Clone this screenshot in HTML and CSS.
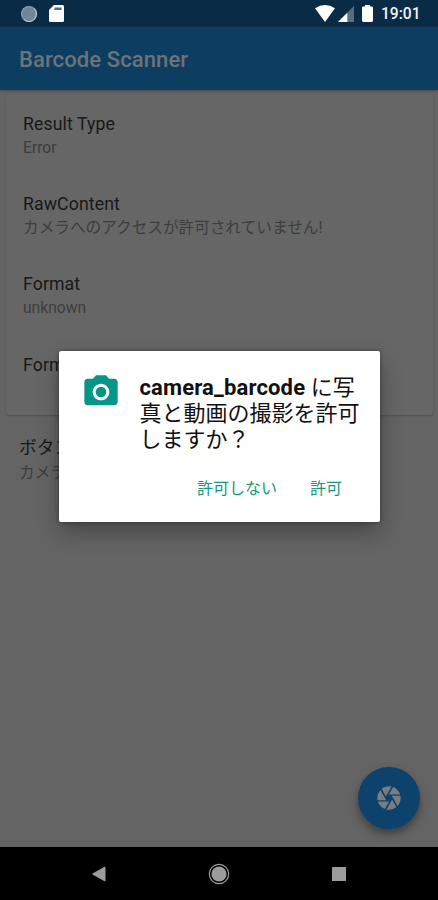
FILE: index.html
```html
<!DOCTYPE html>
<html lang="ja">
<head>
<meta charset="utf-8">
<meta name="viewport" content="width=device-width">
<title>Barcode Scanner</title>
<link rel="stylesheet" href="styles.css">
</head>
<body>
<div class="screen">
  <header class="status">
    <div class="status-left">
      <span class="sync"></span>
      <svg class="sd" viewBox="0 0 15 17"><path d="M5 0H13.5Q15 0 15 1.5V15.5Q15 17 13.5 17H1.5Q0 17 0 15.5V5Z" fill="#fff"/><path d="M6 2.5H12.5V5H5Z" fill="#53687d"/></svg>
    </div>
    <div class="status-right">
      <svg class="wifi" viewBox="0 0 20 17"><path d="M0 3.2Q10-3.2 20 3.2L10 17Z" fill="#fff"/></svg>
      <svg class="cell" viewBox="0 0 16 16"><path d="M16 0V16H0Z" fill="#536f83"/><path d="M9.3 6.7V16H0Z" fill="#fff"/></svg>
      <svg class="battery" viewBox="0 0 11 17"><path d="M3 0H8V1.6H9.7Q11 1.6 11 3V15.6Q11 17 9.7 17H1.3Q0 17 0 15.6V3Q0 1.6 1.3 1.6H3Z" fill="#fff"/></svg>
      <span class="clock">19:01</span>
    </div>
  </header>
  <div class="appbar"><h1 class="heading">Barcode Scanner</h1></div>
  <main class="content">
    <section class="card">
      <div class="tile"><div class="name">Result Type</div><div class="value">Error</div></div>
      <div class="tile"><div class="name">RawContent</div><div class="value">カメラへのアクセスが許可されていません!</div></div>
      <div class="tile"><div class="name">Format</div><div class="value">unknown</div></div>
      <div class="tile"><div class="name">Format</div></div>
    </section>
    <div class="tile outside"><div class="name">ボタン</div><div class="value">カメラ</div></div>
    <button class="fab" aria-label="Scan">
      <svg viewBox="0 0 24 24"><path fill="#7c7c7c" d="M9.4 10.5l4.77-8.26C13.47 2.09 12.75 2 12 2c-2.4 0-4.6.85-6.32 2.25l3.66 6.35.06-.1zM21.54 9c-.92-2.92-3.15-5.26-6-6.34L11.88 9h9.66zm.26 1h-7.49l.29.5 4.76 8.25C21 16.97 22 14.61 22 12c0-.69-.07-1.35-.2-2zM8.54 12l-3.9-6.75C3.01 7.03 2 9.39 2 12c0 .69.07 1.35.2 2h7.49l-1.15-2zm-6.08 3c.92 2.92 3.15 5.26 6 6.34L12.12 15H2.46zm11.27 0l-3.9 6.76c.7.15 1.42.24 2.17.24 2.4 0 4.6-.85 6.32-2.25l-3.66-6.35-.93 1.6z"/></svg>
    </button>
  </main>
  <nav class="navbar">
    <svg viewBox="0 0 24 24"><path d="M5.5 12L18 5V19Z" fill="#9c9c9c" stroke="#9c9c9c" stroke-linejoin="round"/></svg>
    <svg viewBox="0 0 24 24"><circle cx="12" cy="12" r="9.7" fill="none" stroke="#9c9c9c" stroke-width="1.2"/><circle cx="12" cy="12" r="7.6" fill="#9c9c9c"/></svg>
    <svg viewBox="0 0 24 24"><rect x="5" y="5" width="14" height="14" rx=".6" fill="#9c9c9c"/></svg>
  </nav>
  <div class="dialog" role="dialog">
    <div class="dialog-body">
      <svg class="camera" viewBox="0 0 24 24"><g fill="#069688"><circle cx="12" cy="12" r="3.2"/><path d="M9 2L7.17 4H4c-1.1 0-2 .9-2 2v12c0 1.1.9 2 2 2h16c1.1 0 2-.9 2-2V6c0-1.1-.9-2-2-2h-3.17L15 2H9zm3 15c-2.76 0-5-2.24-5-5s2.24-5 5-5 5 2.24 5 5-2.24 5-5 5z"/></g></svg>
      <p class="message"><b>camera_barcode</b> に写<br>真と動画の撮影を許可<br>しますか？</p>
    </div>
    <div class="actions"><button>許可しない</button><button>許可</button></div>
  </div>
</div>
</body>
</html>
```
FILE: styles.css
```css
* { box-sizing: border-box; }
body { margin: 0; font-family: Roboto, "Noto Sans CJK JP", sans-serif; }
button { border: 0; padding: 0; background: none; font: inherit; }
svg { display: block; }
.screen { position: relative; width: 438px; height: 900px; display: flex; flex-direction: column; overflow: hidden; background: #646464; }
.status { height: 27px; flex: none; background: #0a2b45; display: flex; justify-content: space-between; padding: 0 18px 0 21px; }
.status-left, .status-right { display: flex; align-items: center; }
.status-left { gap: 12px; }
.sync { width: 16px; height: 16px; border-radius: 50%; background: #708797; border: 1px solid #8fa3af; border-right-color: #d3dfe3; border-bottom-color: #c3d0d6; }
.sd { width: 15px; height: 17px; }
.wifi { width: 20px; height: 17px; margin-right: 3px; }
.cell { width: 16px; height: 16px; margin-right: 8px; }
.battery { width: 11px; height: 17px; margin-right: 8px; }
.clock { color: #f2f5f7; font-size: 15.6px; font-weight: 500; line-height: 27px; width: 39px; white-space: nowrap; padding-top: 2px; }
.appbar { height: 63px; flex: none; display: flex; align-items: center; padding: 2px 19px 0; background: #0d3d61; box-shadow: 0 1px 3px #3f4a53; z-index: 1; }
.heading { margin: 0; color: #6d7378; font-size: 22px; font-weight: 500; letter-spacing: .1px; }
.content { flex: 1; position: relative; padding-top: 4px; }
.card { height: 321px; margin: 0 5px 0 6px; border-radius: 4px; background: #666; padding: 19px 17px 0; box-shadow: 0 1px 2px #505050; }
.tile { height: 80.2px; }
.name { color: #181818; font-size: 17.7px; line-height: 23px; letter-spacing: .1px; }
.value { color: #3d3d3d; font-size: 15.65px; line-height: 23px; }
.outside { padding: 22px 19px 0; }
.outside .value { padding-top: 1px; }
.fab { position: absolute; right: 18px; bottom: 18px; width: 62px; height: 62px; border-radius: 50%; background: #0c426c; box-shadow: 0 5px 8px #3f3f3f; display: flex; align-items: center; justify-content: center; }
.fab svg { width: 28px; height: 28px; }
.navbar { height: 53px; flex: none; background: #000; display: flex; justify-content: space-between; align-items: center; padding: 0 87px; }
.navbar svg { width: 24px; height: 24px; }
.dialog { position: absolute; z-index: 2; left: 59px; top: 351px; width: 321px; height: 171px; border-radius: 2px; background: #fff; box-shadow: 0 10px 22px rgba(0,0,0,.3), 0 0 4px rgba(0,0,0,.35); }
.dialog-body { display: flex; padding: 21px 0 0 22px; }
.camera { width: 40px; height: 40px; flex: none; }
.message { margin: 3px 0 0 18.5px; color: #111; font-size: 22px; line-height: 26px; white-space: nowrap; }
.message b { font-weight: 700; font-size: 22px; letter-spacing: .15px; }
.actions { display: flex; justify-content: flex-end; gap: 33px; padding: 24px 38px 0 0; color: #16967f; font-size: 16px; line-height: 24px; }
.actions button { color: inherit; }
```
